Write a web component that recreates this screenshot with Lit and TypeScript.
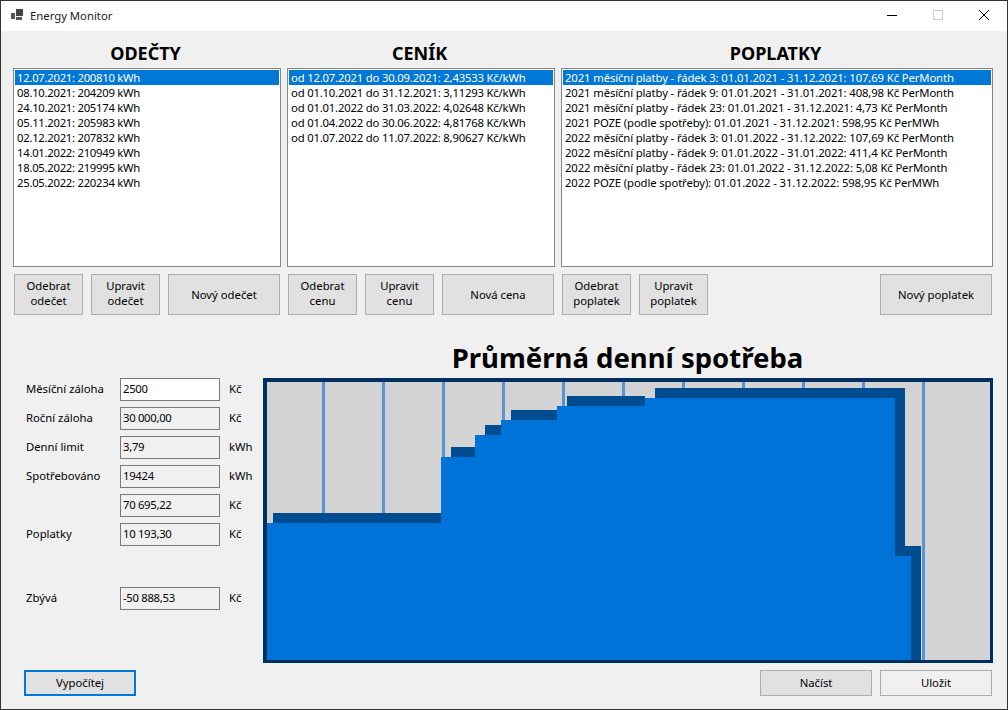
import { LitElement, html, css, svg } from "lit";
import { customElement } from "lit/decorators.js";

const READINGS = [
  "12.07.2021: 200810 kWh",
  "08.10.2021: 204209 kWh",
  "24.10.2021: 205174 kWh",
  "05.11.2021: 205983 kWh",
  "02.12.2021: 207832 kWh",
  "14.01.2022: 210949 kWh",
  "18.05.2022: 219995 kWh",
  "25.05.2022: 220234 kWh",
];

const PRICES = [
  "od 12.07.2021 do 30.09.2021: 2,43533 Kč/kWh",
  "od 01.10.2021 do 31.12.2021: 3,11293 Kč/kWh",
  "od 01.01.2022 do 31.03.2022: 4,02648 Kč/kWh",
  "od 01.04.2022 do 30.06.2022: 4,81768 Kč/kWh",
  "od 01.07.2022 do 11.07.2022: 8,90627 Kč/kWh",
];

const FEES = [
  "2021 měsíční platby - řádek 3: 01.01.2021 - 31.12.2021: 107,69 Kč PerMonth",
  "2021 měsíční platby - řádek 9: 01.01.2021 - 31.01.2021: 408,98 Kč PerMonth",
  "2021 měsíční platby - řádek 23: 01.01.2021 - 31.12.2021: 4,73 Kč PerMonth",
  "2021 POZE (podle spotřeby): 01.01.2021 - 31.12.2021: 598,95 Kč PerMWh",
  "2022 měsíční platby - řádek 3: 01.01.2022 - 31.12.2022: 107,69 Kč PerMonth",
  "2022 měsíční platby - řádek 9: 01.01.2022 - 31.01.2022: 411,4 Kč PerMonth",
  "2022 měsíční platby - řádek 23: 01.01.2022 - 31.12.2022: 5,08 Kč PerMonth",
  "2022 POZE (podle spotřeby): 01.01.2022 - 31.12.2022: 598,95 Kč PerMWh",
];

const PANELS = [
  {
    title: "ODEČTY",
    items: READINGS,
    listClass: "readings",
    buttons: [["Odebrat", "odečet"], ["Upravit", "odečet"], ["Nový odečet"]],
  },
  {
    title: "CENÍK",
    items: PRICES,
    listClass: "prices",
    buttons: [["Odebrat", "cenu"], ["Upravit", "cenu"], ["Nová cena"]],
  },
  {
    title: "POPLATKY",
    items: FEES,
    listClass: "fees",
    buttons: [["Odebrat", "poplatek"], ["Upravit", "poplatek"], ["Nový poplatek"]],
  },
];

const FIELDS = [
  { label: "Měsíční záloha", value: "2500", unit: "Kč", editable: true },
  { label: "Roční záloha", value: "30 000,00", unit: "Kč" },
  { label: "Denní limit", value: "3,79", unit: "kWh" },
  { label: "Spotřebováno", value: "19424", unit: "kWh" },
  { label: "", value: "70 695,22", unit: "Kč" },
  { label: "Poplatky", value: "10 193,30", unit: "Kč" },
  { label: "Zbývá", value: "-50 888,53", unit: "Kč", gap: true },
];

// chart is drawn in window coordinates, the viewBox crops it to the plot area
const GRID_X = [322, 382, 442, 502, 562, 622, 682, 742, 802, 862, 922];
const AREA =
  "M267 523H441V457H475V435H501V420H557V406H645V398H895V556H911V660H267Z";
// x, y, w, h of the darker edge above the area
const EDGE = [
  [273, 513, 168, 10],
  [451, 447, 24, 10],
  [485, 425, 16, 10],
  [511, 410, 46, 10],
  [567, 396, 78, 10],
  [655, 388, 250, 10],
  [895, 388, 10, 168],
  [895, 546, 26, 10],
  [911, 546, 10, 114],
];

@customElement("app-root")
export class AppRoot extends LitElement {
  static styles = css`
    :host {
      display: block;
      font-family: "Noto Sans", "Open Sans", sans-serif;
      font-size: 11.3px;
      color: #000;
    }
    .window {
      box-sizing: border-box;
      width: 1008px;
      height: 710px;
      border: 1px solid #333;
      background: #f0f0f0;
      display: flex;
      flex-direction: column;
    }
    .titlebar {
      height: 30px;
      background: #fff;
      display: flex;
      align-items: center;
      padding-left: 10px;
      flex: none;
    }
    .app-icon {
      width: 12px;
      height: 12px;
      margin: 0 7px 2px 0;
    }
    .app-name {
      flex: 1;
      color: #222;
      padding-bottom: 2px;
    }
    .win-btn {
      box-sizing: border-box;
      width: 46px;
      height: 30px;
      padding-bottom: 2px;
      display: flex;
      align-items: center;
      justify-content: center;
    }
    .panels {
      display: grid;
      grid-template-columns: 268px 268px 432px;
      column-gap: 6px;
      padding: 9px 0 0 12px;
    }
    .panel h2 {
      margin: 0 0 1px;
      height: 27px;
      line-height: 27px;
      font-size: 18px;
      font-weight: 700;
      text-align: center;
      padding-right: 3px;
    }
    .list {
      box-sizing: border-box;
      height: 199px;
      background: #fff;
      border: 1px solid #828790;
      padding: 1px;
      overflow: hidden;
    }
    .list.readings {
      letter-spacing: -0.27px;
    }
    .list.prices {
      letter-spacing: -0.19px;
    }
    .list.fees {
      letter-spacing: -0.12px;
    }
    .item {
      height: 15px;
      line-height: 15px;
      padding-left: 2px;
      white-space: nowrap;
    }
    .item.selected {
      background: #0078d7;
      color: #fff;
    }
    .actions {
      display: flex;
      gap: 8px;
      margin: 7px 1px 0;
    }
    button {
      font: inherit;
      color: #000;
      background: #e1e1e1;
      border: 1px solid #adadad;
      padding: 0;
      line-height: 15px;
    }
    .actions button {
      width: 69px;
      height: 41px;
      padding-bottom: 3px;
    }
    .actions button.wide {
      width: 112px;
      padding-bottom: 0;
    }
    .actions button.push {
      margin-left: auto;
    }
    .lower {
      display: flex;
      padding-top: 22px;
      flex: 1;
    }
    .form {
      width: 250px;
      padding: 41px 0 0 25px;
      box-sizing: border-box;
      flex: none;
    }
    .row {
      display: grid;
      grid-template-columns: 94px 100px auto;
      align-items: center;
      height: 23px;
      margin-bottom: 6px;
    }
    .row.gap {
      margin-top: 41px;
    }
    .row span {
      padding-bottom: 2px;
    }
    .row .unit {
      padding-left: 9px;
    }
    input {
      box-sizing: border-box;
      width: 100%;
      height: 23px;
      border: 1px solid #7a7a7a;
      background: #f0f0f0;
      font: inherit;
      letter-spacing: -0.3px;
      color: #000;
      padding: 0 2px 2px;
      outline: none;
    }
    input.editable {
      background: #fff;
    }
    .chart-col {
      margin-left: 12px;
      width: 730px;
    }
    .chart-col h1 {
      margin: 0;
      height: 41px;
      line-height: 41px;
      font-size: 27.5px;
      font-weight: 700;
      text-align: center;
      white-space: nowrap;
      padding-right: 1px;
    }
    .chart {
      box-sizing: border-box;
      height: 285px;
      border: solid #003060;
      border-width: 4px 3px 3px 4px;
      background: #d3d3d3;
    }
    .chart svg {
      display: block;
      width: 723px;
      height: 278px;
    }
    .footer {
      display: flex;
      gap: 8px;
      padding: 0 15px 13px 23px;
      flex: none;
    }
    .footer button {
      width: 112px;
      height: 26px;
      padding-bottom: 2px;
    }
    .footer button.primary {
      border: 2px solid #0078d7;
      margin-right: auto;
    }
    .footer button.light {
      background: #f0f0f0;
    }
  `;

  private renderPanel(panel: (typeof PANELS)[number], index: number) {
    return html`
      <section class="panel">
        <h2>${panel.title}</h2>
        <div class="list ${panel.listClass}">
          ${panel.items.map(
            (item, i) =>
              html`<div class="item ${i === 0 ? "selected" : ""}">${item}</div>`
          )}
        </div>
        <div class="actions">
          ${panel.buttons.map((lines) => {
            const cls = lines.length === 1 ? (index === 2 ? "wide push" : "wide") : "";
            return html`<button class=${cls}>
              ${lines.map((l, j) => (j ? html`<br />${l}` : l))}
            </button>`;
          })}
        </div>
      </section>
    `;
  }

  private renderChart() {
    return html`
      <svg viewBox="267 382 723 278" shape-rendering="crispEdges">
        ${GRID_X.map(
          (x) => svg`<rect x=${x} y="382" width="3" height="278" fill="#5894d3"></rect>`
        )}
        ${EDGE.map(
          ([x, y, w, h]) => svg`<rect x=${x} y=${y} width=${w} height=${h} fill="#004c91"></rect>`
        )}
        <path d=${AREA} fill="#0073d9"></path>
      </svg>
    `;
  }

  render() {
    return html`
      <div class="window">
        <header class="titlebar">
          <svg class="app-icon" viewBox="0 0 12 12">
            <rect x="0" y="4" width="4" height="6" fill="#555"></rect>
            <rect x="5" y="0" width="7" height="7" fill="#444"></rect>
            <rect x="5" y="8" width="6" height="3" fill="#555"></rect>
          </svg>
          <span class="app-name">Energy Monitor</span>
          <div class="win-btn">
            <svg width="10" height="10" viewBox="0 0 10 10">
              <rect x="0" y="5" width="10" height="1" fill="#000"></rect>
            </svg>
          </div>
          <div class="win-btn">
            <svg width="10" height="10" viewBox="0 0 10 10">
              <rect x="0.5" y="0.5" width="9" height="9" fill="none" stroke="#ccc"></rect>
            </svg>
          </div>
          <div class="win-btn">
            <svg width="10" height="10" viewBox="0 0 10 10">
              <path d="M0 0L10 10M10 0L0 10" stroke="#000" fill="none"></path>
            </svg>
          </div>
        </header>

        <div class="panels">${PANELS.map((p, i) => this.renderPanel(p, i))}</div>

        <div class="lower">
          <div class="form">
            ${FIELDS.map(
              (f) => html`
                <div class="row ${f.gap ? "gap" : ""}">
                  <span>${f.label}</span>
                  <input class=${f.editable ? "editable" : ""} .value=${f.value} ?readonly=${!f.editable} />
                  <span class="unit">${f.unit}</span>
                </div>
              `
            )}
          </div>
          <div class="chart-col">
            <h1>Průměrná denní spotřeba</h1>
            <div class="chart">${this.renderChart()}</div>
          </div>
        </div>

        <footer class="footer">
          <button class="primary">Vypočítej</button>
          <button>Načíst</button>
          <button class="light">Uložit</button>
        </footer>
      </div>
    `;
  }
}
